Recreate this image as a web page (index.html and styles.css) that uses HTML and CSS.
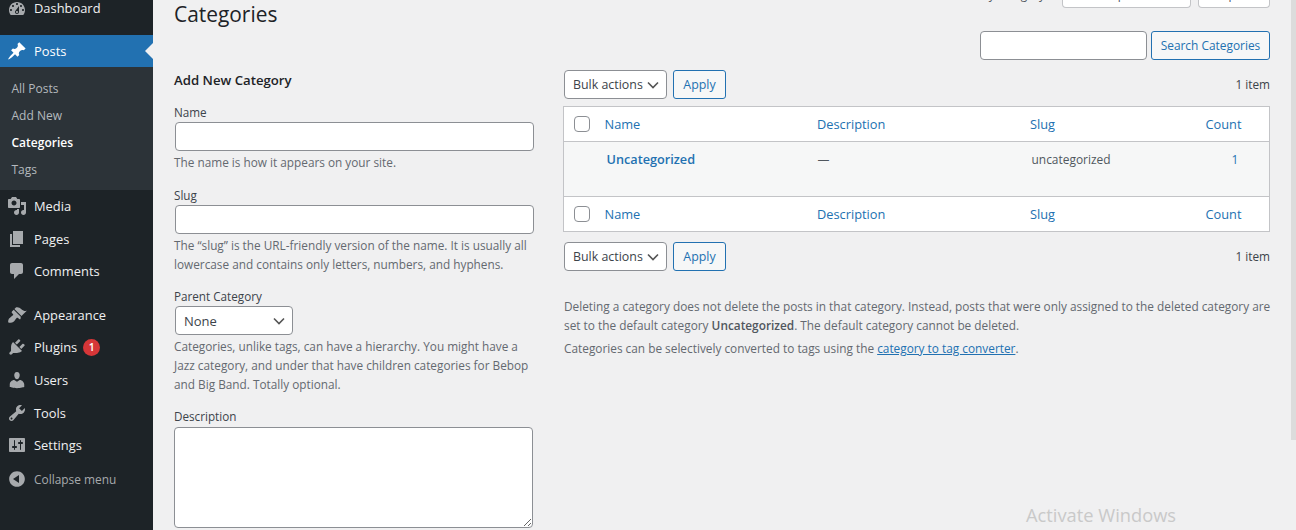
FILE: index.html
```html
<!DOCTYPE html>
<html lang="en">
<head>
<meta charset="utf-8">
<title>Categories</title>
<link rel="stylesheet" href="styles.css">
</head>
<body>
<div class="shell">
  <nav class="side">
    <a class="item first"><svg class="ic" viewBox="0 0 20 20"><path d="M3.76 16h12.48c1.1-1.37 1.76-3.11 1.76-5 0-4.42-3.58-8-8-8s-8 3.58-8 8c0 1.89.66 3.63 1.76 5zM10 4c.55 0 1 .45 1 1s-.45 1-1 1-1-.45-1-1 .45-1 1-1zM6 6c.55 0 1 .45 1 1s-.45 1-1 1-1-.45-1-1 .45-1 1-1zm8 0c.55 0 1 .45 1 1s-.45 1-1 1-1-.45-1-1 .45-1 1-1zm-5.37 5.55L12 7v6c0 1.1-.9 2-2 2s-2-.9-2-2c0-.57.24-1.08.63-1.45zM4 10c.55 0 1 .45 1 1s-.45 1-1 1-1-.45-1-1 .45-1 1-1zm12 0c.55 0 1 .45 1 1s-.45 1-1 1-1-.45-1-1 .45-1 1-1zm-5 3c0-.55-.45-1-1-1s-1 .45-1 1 .45 1 1 1 1-.45 1-1z"/></svg>Dashboard</a>
    <a class="item active"><svg class="ic" viewBox="0 0 20 20"><path d="M10.44 3.02l1.82-1.82 6.36 6.35-1.83 1.82c-1.05-.68-2.48-.57-3.41.36l-.75.75c-.92.93-1.04 2.35-.35 3.41l-1.83 1.82-2.41-2.41-2.8 2.79c-.42.42-3.38 2.71-3.8 2.29s1.86-3.39 2.28-3.81l2.79-2.79L4.1 9.36l1.83-1.82c1.05.69 2.48.57 3.41-.36l.75-.75c.93-.92 1.04-2.35.35-3.41z"/></svg>Posts</a>
    <div class="sub">
      <a>All Posts</a>
      <a>Add New</a>
      <a class="cur">Categories</a>
      <a>Tags</a>
    </div>
    <a class="item"><svg class="ic" viewBox="0 0 20 20"><path d="M13 11V4c0-.55-.45-1-1-1h-1.670L9 1H5L3.670 3H2c-.55 0-1 .45-1 1v7c0 .55.45 1 1 1h10c.55 0 1-.45 1-1zM7 4.500c1.380 0 2.500 1.120 2.500 2.500S8.380 9.500 7 9.500 4.500 8.380 4.500 7 5.620 4.500 7 4.500zM14 6h5v10.500c0 1.380-1.120 2.500-2.500 2.500S14 17.880 14 16.500s1.120-2.500 2.500-2.500c.17 0 .34.02.5.05V9h-3V6zm-4 8.050V13h2v3.500c0 1.380-1.120 2.500-2.500 2.500S7 17.880 7 16.500 8.120 14 9.500 14c.17 0 .34.02.5.05z"/></svg>Media</a>
    <a class="item"><svg class="ic" viewBox="0 0 20 20"><path d="M6 15V2h10v13H6zm-1 1h8v2H3V5h2v11z"/></svg>Pages</a>
    <a class="item"><svg class="ic" viewBox="0 0 20 20"><path d="M5 2h9c1.100 0 2 .9 2 2v7c0 1.100-.9 2-2 2h-2l-5 5v-5H5c-1.100 0-2-.9-2-2V4c0-1.100.9-2 2-2z"/></svg>Comments</a>
    <a class="item sep"><svg class="ic" viewBox="0 0 20 20"><path d="M14.480 11.060L7.410 3.990l1.500-1.500c.5-.56 2.300-.47 3.510.32 1.210.8 1.430 1.280 2.910 2.100 1.180.64 2.450 1.260 4.450.85zm-.71.71L6.700 4.700 4.930 6.470c-.39.39-.39 1.020 0 1.410l1.060 1.060c.39.39.39 1.030 0 1.420-.6.6-1.430 1.110-2.210 1.690-.35.26-.7.53-1.010.84C1.430 13.230.79 16.780 1.500 17.490c.71.71 4.260.07 5.600-1.270.31-.31.58-.66.84-1.010.58-.78 1.090-1.610 1.690-2.210.39-.39 1.030-.39 1.420 0l1.060 1.060c.39.39 1.020.39 1.410 0z"/></svg>Appearance</a>
    <a class="item"><svg class="ic" viewBox="0 0 20 20"><path d="M13.110 4.360L9.870 7.600 8 5.730l3.240-3.240c.35-.34 1.050-.2 1.560.32.52.51.66 1.210.31 1.550zm-8 1.770l.91-1.120 9.010 9.010-1.190.84c-.71.71-2.630 1.160-3.820 1.160H6.140L4.900 17.260c-.59.59-1.540.59-2.120 0-.59-.58-.59-1.530 0-2.120l1.240-1.240v-3.880c0-1.130.4-3.190 1.090-3.890zm7.260 3.970l3.240-3.240c.34-.35 1.040-.21 1.550.31.52.51.66 1.210.31 1.550l-3.240 3.250z"/></svg>Plugins<span class="badge">1</span></a>
    <a class="item"><svg class="ic" viewBox="0 0 20 20"><path d="M10 9.250c-2.270 0-2.730-3.440-2.730-3.440C7 4.020 7.820 2 9.970 2c2.160 0 2.980 2.020 2.710 3.810 0 0-.41 3.440-2.680 3.440zm0 2.570L12.720 10c2.390 0 4.520 2.330 4.520 4.530v2.490s-3.650 1.130-7.240 1.130c-3.650 0-7.240-1.130-7.240-1.130v-2.490c0-2.250 1.940-4.480 4.470-4.480z"/></svg>Users</a>
    <a class="item"><svg class="ic" viewBox="0 0 20 20"><path d="M16.680 9.770c-1.340 1.340-3.300 1.670-4.950.99l-5.410 6.520c-.99.99-2.590.99-3.580 0s-.99-2.590 0-3.570l6.520-5.420c-.68-1.650-.35-3.610.99-4.950 1.280-1.280 3.120-1.620 4.720-1.060l-2.890 2.890 2.820 2.820 2.860-2.870c.53 1.580.18 3.390-1.080 4.650zM3.810 16.210c.4.39 1.040.39 1.430 0 .4-.4.4-1.040 0-1.430-.39-.4-1.030-.4-1.430 0-.39.39-.39 1.030 0 1.430z"/></svg>Tools</a>
    <a class="item"><svg class="ic" viewBox="0 0 20 20"><path d="M18 16V4c0-.55-.45-1-1-1H3c-.55 0-1 .45-1 1v12c0 .55.45 1 1 1h14c.55 0 1-.45 1-1zM8 11h1c.55 0 1 .45 1 1s-.45 1-1 1H8v1.500c0 .28-.22.5-.5.5s-.5-.22-.5-.5V13H6c-.55 0-1-.45-1-1s.45-1 1-1h1V5.500c0-.28.22-.5.5-.5s.5.22.5.5V11zm5-2h-1c-.55 0-1-.45-1-1s.45-1 1-1h1V5.500c0-.28.22-.5.5-.5s.5.22.5.5V7h1c.55 0 1 .45 1 1s-.45 1-1 1h-1v5.500c0 .28-.22.5-.5.5s-.5-.22-.5-.5V9z"/></svg>Settings</a>
    <a class="item collapse"><svg class="ic" viewBox="0 0 20 20"><path d="M10 2.160c4.330 0 7.840 3.510 7.840 7.840s-3.510 7.840-7.840 7.840S2.160 14.330 2.160 10 5.670 2.160 10 2.160zm2 11.840V6l-6 4z"/></svg>Collapse menu</a>
  </nav>

  <main class="main">
    <div class="topbar">
      <span class="peek">Filter by category</span>
      <span class="peekbox b1">Dropdown</span>
      <span class="peekbox b2">Drop</span>
    </div>
    <div class="cols">
      <section class="left">
        <h1>Categories</h1>
        <h2>Add New Category</h2>
        <label class="lab">Name</label>
        <input class="field" type="text">
        <p class="help one">The name is how it appears on your site.</p>
        <label class="lab">Slug</label>
        <input class="field" type="text">
        <p class="help two">The “slug” is the URL-friendly version of the name. It is usually all lowercase and contains only letters, numbers, and hyphens.</p>
        <label class="lab">Parent Category</label>
        <select class="sel parent"><option>None</option></select>
        <p class="help three">Categories, unlike tags, can have a hierarchy. You might have a Jazz category, and under that have children categories for Bebop and Big Band. Totally optional.</p>
        <label class="lab">Description</label>
        <textarea class="area"></textarea>
      </section>
      <section class="right">
        <div class="search">
          <input class="sinput" type="text">
          <button class="btn sbtn">Search Categories</button>
        </div>
        <div class="tools t1">
          <select class="sel bulk"><option>Bulk actions</option></select>
          <button class="btn apply">Apply</button>
          <span class="count">1 item</span>
        </div>
        <table class="tbl">
          <thead>
            <tr>
              <th class="c0"><span class="cb"></span></th>
              <th class="c1">Name</th>
              <th class="c2">Description</th>
              <th class="c3">Slug</th>
              <th class="c4">Count</th>
            </tr>
          </thead>
          <tbody>
            <tr>
              <td class="c0"></td>
              <td class="c1"><a class="term">Uncategorized</a></td>
              <td class="c2">—</td>
              <td class="c3">uncategorized</td>
              <td class="c4"><a class="num">1</a></td>
            </tr>
          </tbody>
          <tfoot>
            <tr>
              <th class="c0"><span class="cb"></span></th>
              <th class="c1">Name</th>
              <th class="c2">Description</th>
              <th class="c3">Slug</th>
              <th class="c4">Count</th>
            </tr>
          </tfoot>
        </table>
        <div class="tools t2">
          <select class="sel bulk"><option>Bulk actions</option></select>
          <button class="btn apply">Apply</button>
          <span class="count">1 item</span>
        </div>
        <p class="note n1">Deleting a category does not delete the posts in that category. Instead, posts that were only assigned to the deleted category are set to the default category <strong>Uncategorized</strong>. The default category cannot be deleted.</p>
        <p class="note n2">Categories can be selectively converted to tags using the <a class="conv">category to tag converter</a>.</p>
      </section>
    </div>
  </main>
  <div class="thumb"></div>
  <div class="watermark">Activate Windows</div>
</div>
</body>
</html>
```
FILE: styles.css
```css
* { box-sizing: border-box; }
html, body { margin: 0; height: 530px; overflow: hidden; }
body { font-family: "Open Sans", "Noto Sans", sans-serif; font-size: 11.8px; color: #3c434a; background: #f0f0f1; }
.shell { display: flex; width: 1296px; height: 530px; overflow: hidden; position: relative; }

/* sidebar */
.side { width: 153px; flex: none; background: #1d2327; display: flex; flex-direction: column; }
.item { display: flex; align-items: center; height: 32.6px; color: #f0f0f1; font-size: 12.9px; padding-left: 34px; position: relative; }
.ic { position: absolute; left: 7px; top: 50%; width: 20px; height: 20px; margin-top: -10px; fill: #a7aaad; }
.first { height: 35px; align-items: flex-start; line-height: 16px; }
.first .ic { top: -1px; margin-top: 0; }
.active { height: 32px; background: #2271b1; color: #fff; }
.active .ic { fill: #fff; }
.active::after { content: ""; position: absolute; right: 0; top: 50%; margin-top: -8px; border: 8px solid transparent; border-right-color: #f0f0f1; border-left-width: 0; }
.sub { background: #2c3338; height: 123px; display: flex; flex-direction: column; padding-top: 8px; }
.sub a { height: 27px; display: flex; align-items: center; padding-left: 11.5px; color: #b4b9be; font-size: 12px; }
.sub .cur { color: #fff; font-weight: 600; }
.sep { margin-top: 10.8px; }
.badge { margin-left: 6px; width: 17px; height: 17px; border-radius: 50%; background: #d63638; color: #fff; font-size: 10.5px; font-weight: 600; display: flex; align-items: center; justify-content: center; }
.collapse { color: #a7aaad; font-size: 11.9px; margin-top: 1px; }

/* main */
.main { flex: 1; min-width: 0; padding: 0 26px 0 21px; display: flex; flex-direction: column; }
.topbar { height: 8px; display: flex; justify-content: flex-end; align-items: flex-end; gap: 7px; flex: none; }
.peek { line-height: 18px; margin: 0 10px 5px 0; color: #50575e; }
.peekbox { border: 1px solid #c3c4c7; border-top: 0; border-radius: 0 0 4px 4px; background: #fff; height: 22px; flex: none; display: flex; align-items: flex-end; justify-content: center; padding-bottom: 6px; line-height: 14px; overflow: hidden; color: #50575e; }
.b1 { width: 129px; }
.b2 { width: 72px; padding-right: 24px; }
.cols { display: flex; gap: 28px; min-height: 0; }
.left { width: 361px; flex: none; }
.right { width: 707px; flex: none; }

h1 { margin: -8px 0 0; font-size: 20.9px; font-weight: 400; color: #1d2327; line-height: 28px; height: 71px; }
h2 { margin: 0; font-size: 13.2px; font-weight: 600; color: #1d2327; line-height: 18px; height: 32px; }
.lab { display: block; line-height: 18px; height: 19px; font-size: 11.7px; color: #3c434a; }
.field { display: block; width: 359px; height: 28.5px; margin: 0 0 0 1px; border: 1px solid #8c8f94; border-radius: 4px; background: #fff; }
.help { margin: 0; color: #646970; line-height: 19px; }
.one { height: 35.5px; padding-top: 2px; }
.two { height: 53.5px; padding-top: 2px; }
.three { height: 72px; padding-top: 1.5px; }
.sel { appearance: none; -webkit-appearance: none; font: inherit; font-size: 12.4px; color: #3c434a; background: #fff url("data:image/svg+xml,%3Csvg xmlns='http://www.w3.org/2000/svg' viewBox='0 0 12 8'%3E%3Cpath d='M1 1.5l5 5 5-5' fill='none' stroke='%23555' stroke-width='1.6'/%3E%3C/svg%3E") no-repeat right 7px center / 12px 8px; border: 1px solid #8c8f94; border-radius: 4px; height: 29px; padding: 0 20px 0 8px; display: block; }
.parent { width: 118px; margin: 0 0 0 1px; font-size: 13px; }
.area { display: block; width: 359px; height: 101px; margin: 1px 0 0; border: 1px solid #8c8f94; border-radius: 4px; background: #fff; }

.search { display: flex; justify-content: flex-end; gap: 4px; padding-top: 23px; height: 62px; }
.sinput { width: 167px; height: 29px; border: 1px solid #8c8f94; border-radius: 4px; background: #fff; }
.btn { font: inherit; font-size: 12.4px; color: #2271b1; background: #f6f7f7; border: 1px solid #2271b1; border-radius: 3px; height: 29px; padding: 0; }
.sbtn { width: 119px; font-size: 11.9px; padding-bottom: 2px; }
.apply { width: 53px; margin-left: 6px; }
.tools { display: flex; align-items: center; height: 29px; }
.bulk { width: 103px; margin-left: 1px; }
.count { margin-left: auto; margin-bottom: 2px; color: #3c434a; }
.t1 { margin-bottom: 7px; }
.t2 { margin-top: 10px; }

.tbl { width: 707px; table-layout: fixed; border-collapse: collapse; border: 1px solid #c3c4c7; background: #fff; }
.tbl th { font-weight: 400; color: #2271b1; text-align: left; padding: 0 0 0 8px; height: 35px; font-size: 12.8px; }
.tbl thead tr { border-bottom: 1px solid #c3c4c7; }
.tbl tfoot tr { border-top: 1px solid #c3c4c7; }
.tbl tbody td { background: #f6f7f7; height: 55px; vertical-align: top; padding: 9px 0 0 10px; line-height: 18px; color: #50575e; font-size: 11.95px; }
.c0 { width: 33px; }
.c1 { width: 212px; }
.c2 { width: 213px; }
.c3 { width: 176px; }
.tbl th.c0 { padding: 0 0 0 10px; }
.tbl th.c1 { padding-left: 8px; }
.tbl th.c2, .tbl th.c3 { padding-left: 8.5px; }
.tbl td.c1 { padding-top: 8px; padding-left: 10px; }
.tbl td.c2 { padding-left: 9px; }
.cb { display: block; width: 16px; height: 16px; border: 1px solid #8c8f94; border-radius: 4px; background: #fff; }
.term { color: #2271b1; font-weight: 600; font-size: 12.7px; }
.num { color: #2271b1; }
.tbl td.c4 { padding-left: 34px; }
.note { margin: 0 -2px 0 1px; line-height: 19px; color: #646970; font-size: 11.83px; }
.n1 { margin-top: 26px; }
.n2 { margin-top: 4px; }
.note strong { font-weight: 600; color: #50575e; }
.conv { color: #2271b1; text-decoration: underline; }

.thumb { position: absolute; right: 0; top: 0; width: 5px; height: 440px; background: #dcdcdc; }
.watermark { position: absolute; left: 1026px; top: 501px; font-size: 18.3px; line-height: 27px; color: #c9c9c9; }
```
